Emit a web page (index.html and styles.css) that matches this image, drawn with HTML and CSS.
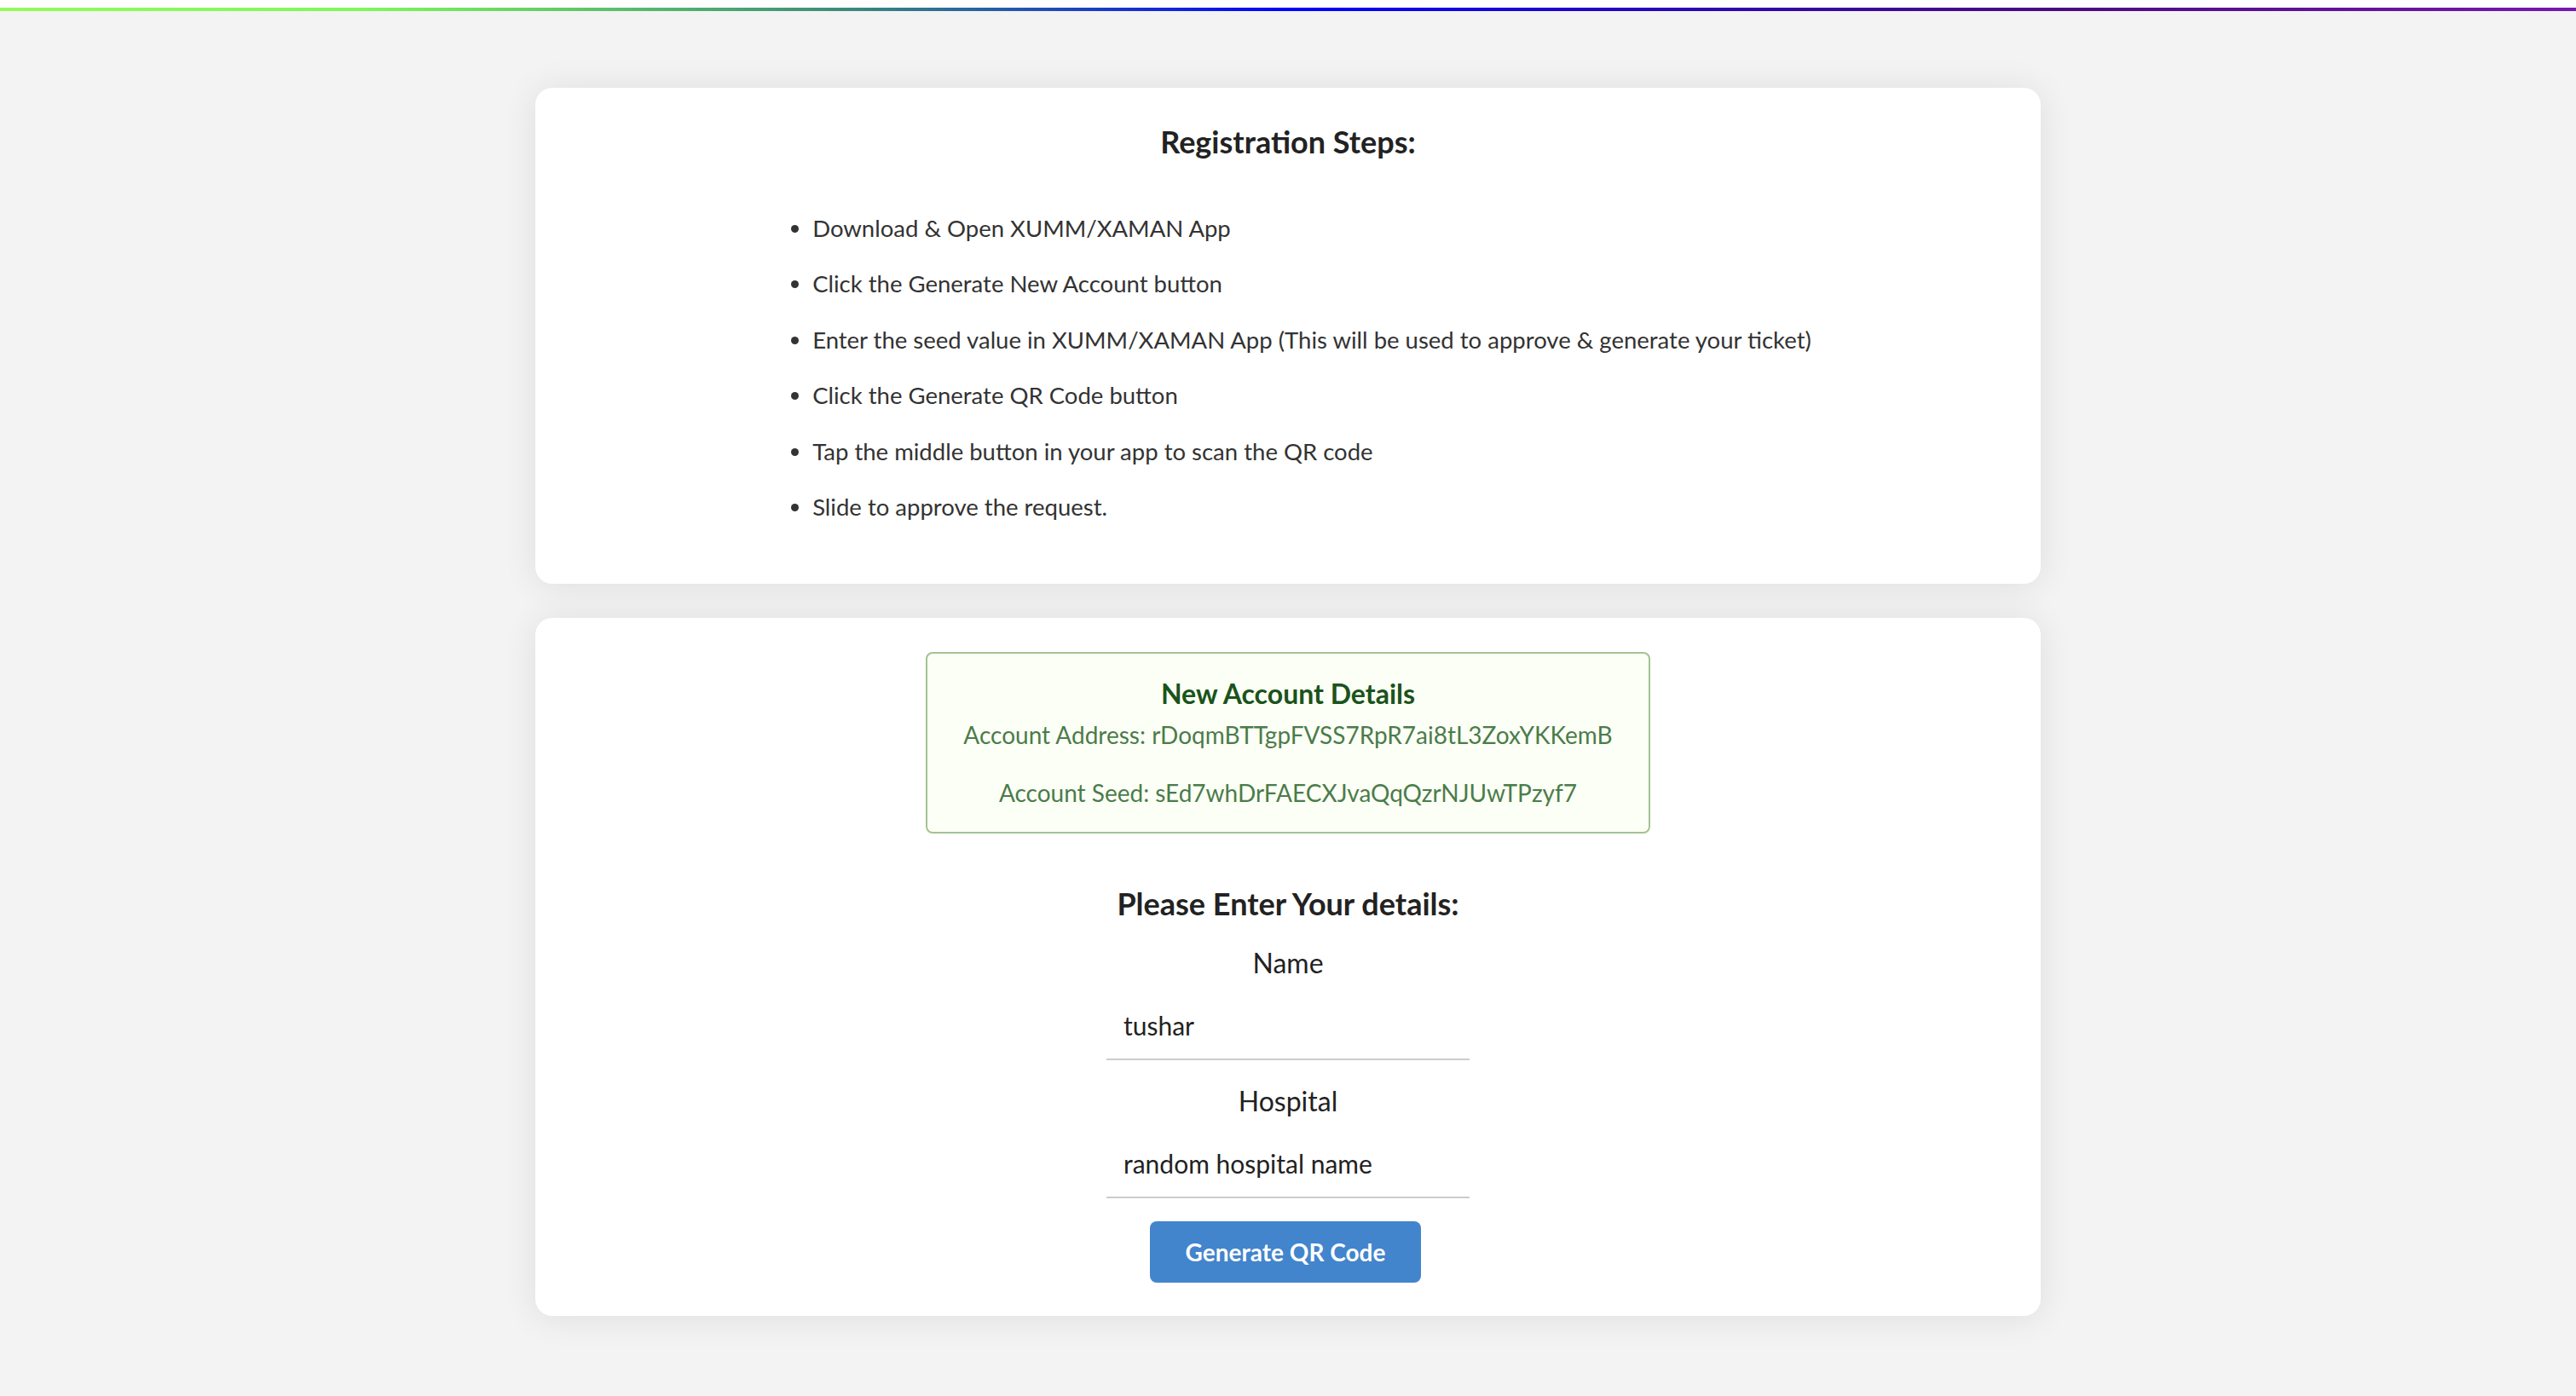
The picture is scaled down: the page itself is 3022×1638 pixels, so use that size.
FILE: index.html
```html
<!DOCTYPE html>
<html lang="en">
<head>
<meta charset="utf-8">
<title>Registration</title>
<link rel="stylesheet" href="styles.css">
</head>
<body>
<div class="topbar"><div class="progress"></div></div>
<main class="page">
  <section class="card steps">
    <h3 class="title">Registration Steps:</h3>
    <ul class="step-list">
      <li>Download &amp; Open XUMM/XAMAN App</li>
      <li>Click the Generate New Account button</li>
      <li>Enter the seed value in XUMM/XAMAN App (This will be used to approve &amp; generate your ticket)</li>
      <li>Click the Generate QR Code button</li>
      <li>Tap the middle button in your app to scan the QR code</li>
      <li>Slide to approve the request.</li>
    </ul>
  </section>
  <section class="card form-card">
    <div class="message">
      <div class="message-header">New Account Details</div>
      <p class="first">Account Address: rDoqmBTTgpFVSS7RpR7ai8tL3ZoxYKKemB</p>
      <p>Account Seed: sEd7whDrFAECXJvaQqQzrNJUwTPzyf7</p>
    </div>
    <h3 class="title details-title">Please Enter Your details:</h3>
    <div class="field">
      <label class="label" for="name">Name</label>
      <input class="input" id="name" type="text" value="tushar">
    </div>
    <div class="field second">
      <label class="label" for="hospital">Hospital</label>
      <input class="input" id="hospital" type="text" value="random hospital name">
    </div>
    <button class="button" type="button">Generate QR Code</button>
  </section>
</main>
</body>
</html>
```
FILE: styles.css
```css
html {
  background: #f3f3f3;
}
body {
  margin: 0;
  background: #f3f3f3;
  font-family: Lato, "Open Sans", "Liberation Sans", sans-serif;
  color: rgba(0, 0, 0, 0.87);
  font-size: 28px;
}
.topbar {
  background: #ffffff;
  padding-top: 9px;
}
.progress {
  height: 4px;
  background: linear-gradient(90deg, #93fb5b 0%, #7ff859 14%, #3a8a7a 33%, #0000ff 50%, #2a04b8 65%, #4b0a80 80%, #7618b2 100%);
}
.page {
  padding: 90px 0 60px;
  display: flex;
  flex-direction: column;
  align-items: center;
  gap: 40px;
}
.card {
  width: 1766px;
  box-sizing: border-box;
  background: #ffffff;
  border-radius: 20px;
  box-shadow: 0 2px 40px rgba(0, 0, 0, 0.09);
  padding: 40px 40px;
}
.title {
  margin: 0;
  font-size: 36px;
  font-weight: 700;
  line-height: 46px;
  text-align: center;
  color: #222222;
}
.step-list {
  width: fit-content;
  margin: 46px auto 17px;
  padding: 0 0 0 56px;
  color: #333333;
  font-size: 27.5px;
}
.step-list li {
  line-height: 40px;
  padding: 12.5px 0 13px;
}
.form-card {
  display: flex;
  flex-direction: column;
  align-items: center;
  padding-bottom: 39px;
}
.message {
  background: #fcfff5;
  border: 2px solid #a3c293;
  border-radius: 8px;
  padding: 26px 42px;
  text-align: center;
  color: #2c662d;
}
.message-header {
  font-size: 32px;
  font-weight: 700;
  line-height: 41px;
  color: #1a531b;
}
.message p {
  margin: 28px 0 0;
  line-height: 40px;
  opacity: 0.85;
}
.message p.first {
  margin-top: 8px;
}
.details-title {
  margin-top: 59px;
}
.field {
  display: flex;
  flex-direction: column;
  align-items: center;
  margin-top: 27px;
}
.field.second {
  margin-top: 28px;
}
.label {
  font-size: 32px;
  line-height: 40px;
  margin-bottom: 16px;
  color: #222222;
}
.input {
  width: 426px;
  height: 78px;
  box-sizing: border-box;
  border: none;
  border-bottom: 2px solid #cccccc;
  background: transparent;
  padding: 0 20px 2px;
  font-family: Lato, "Open Sans", "Liberation Sans", sans-serif;
  font-size: 30px;
  color: #222222;
  outline: none;
}
.button {
  margin-top: 27px;
  margin-right: 6px;
  background: #4285cc;
  color: #ffffff;
  border: none;
  border-radius: 8px;
  padding: 22px 42px;
  font-family: Lato, "Open Sans", "Liberation Sans", sans-serif;
  font-size: 28px;
  font-weight: 700;
  line-height: 28px;
  cursor: pointer;
}
```
